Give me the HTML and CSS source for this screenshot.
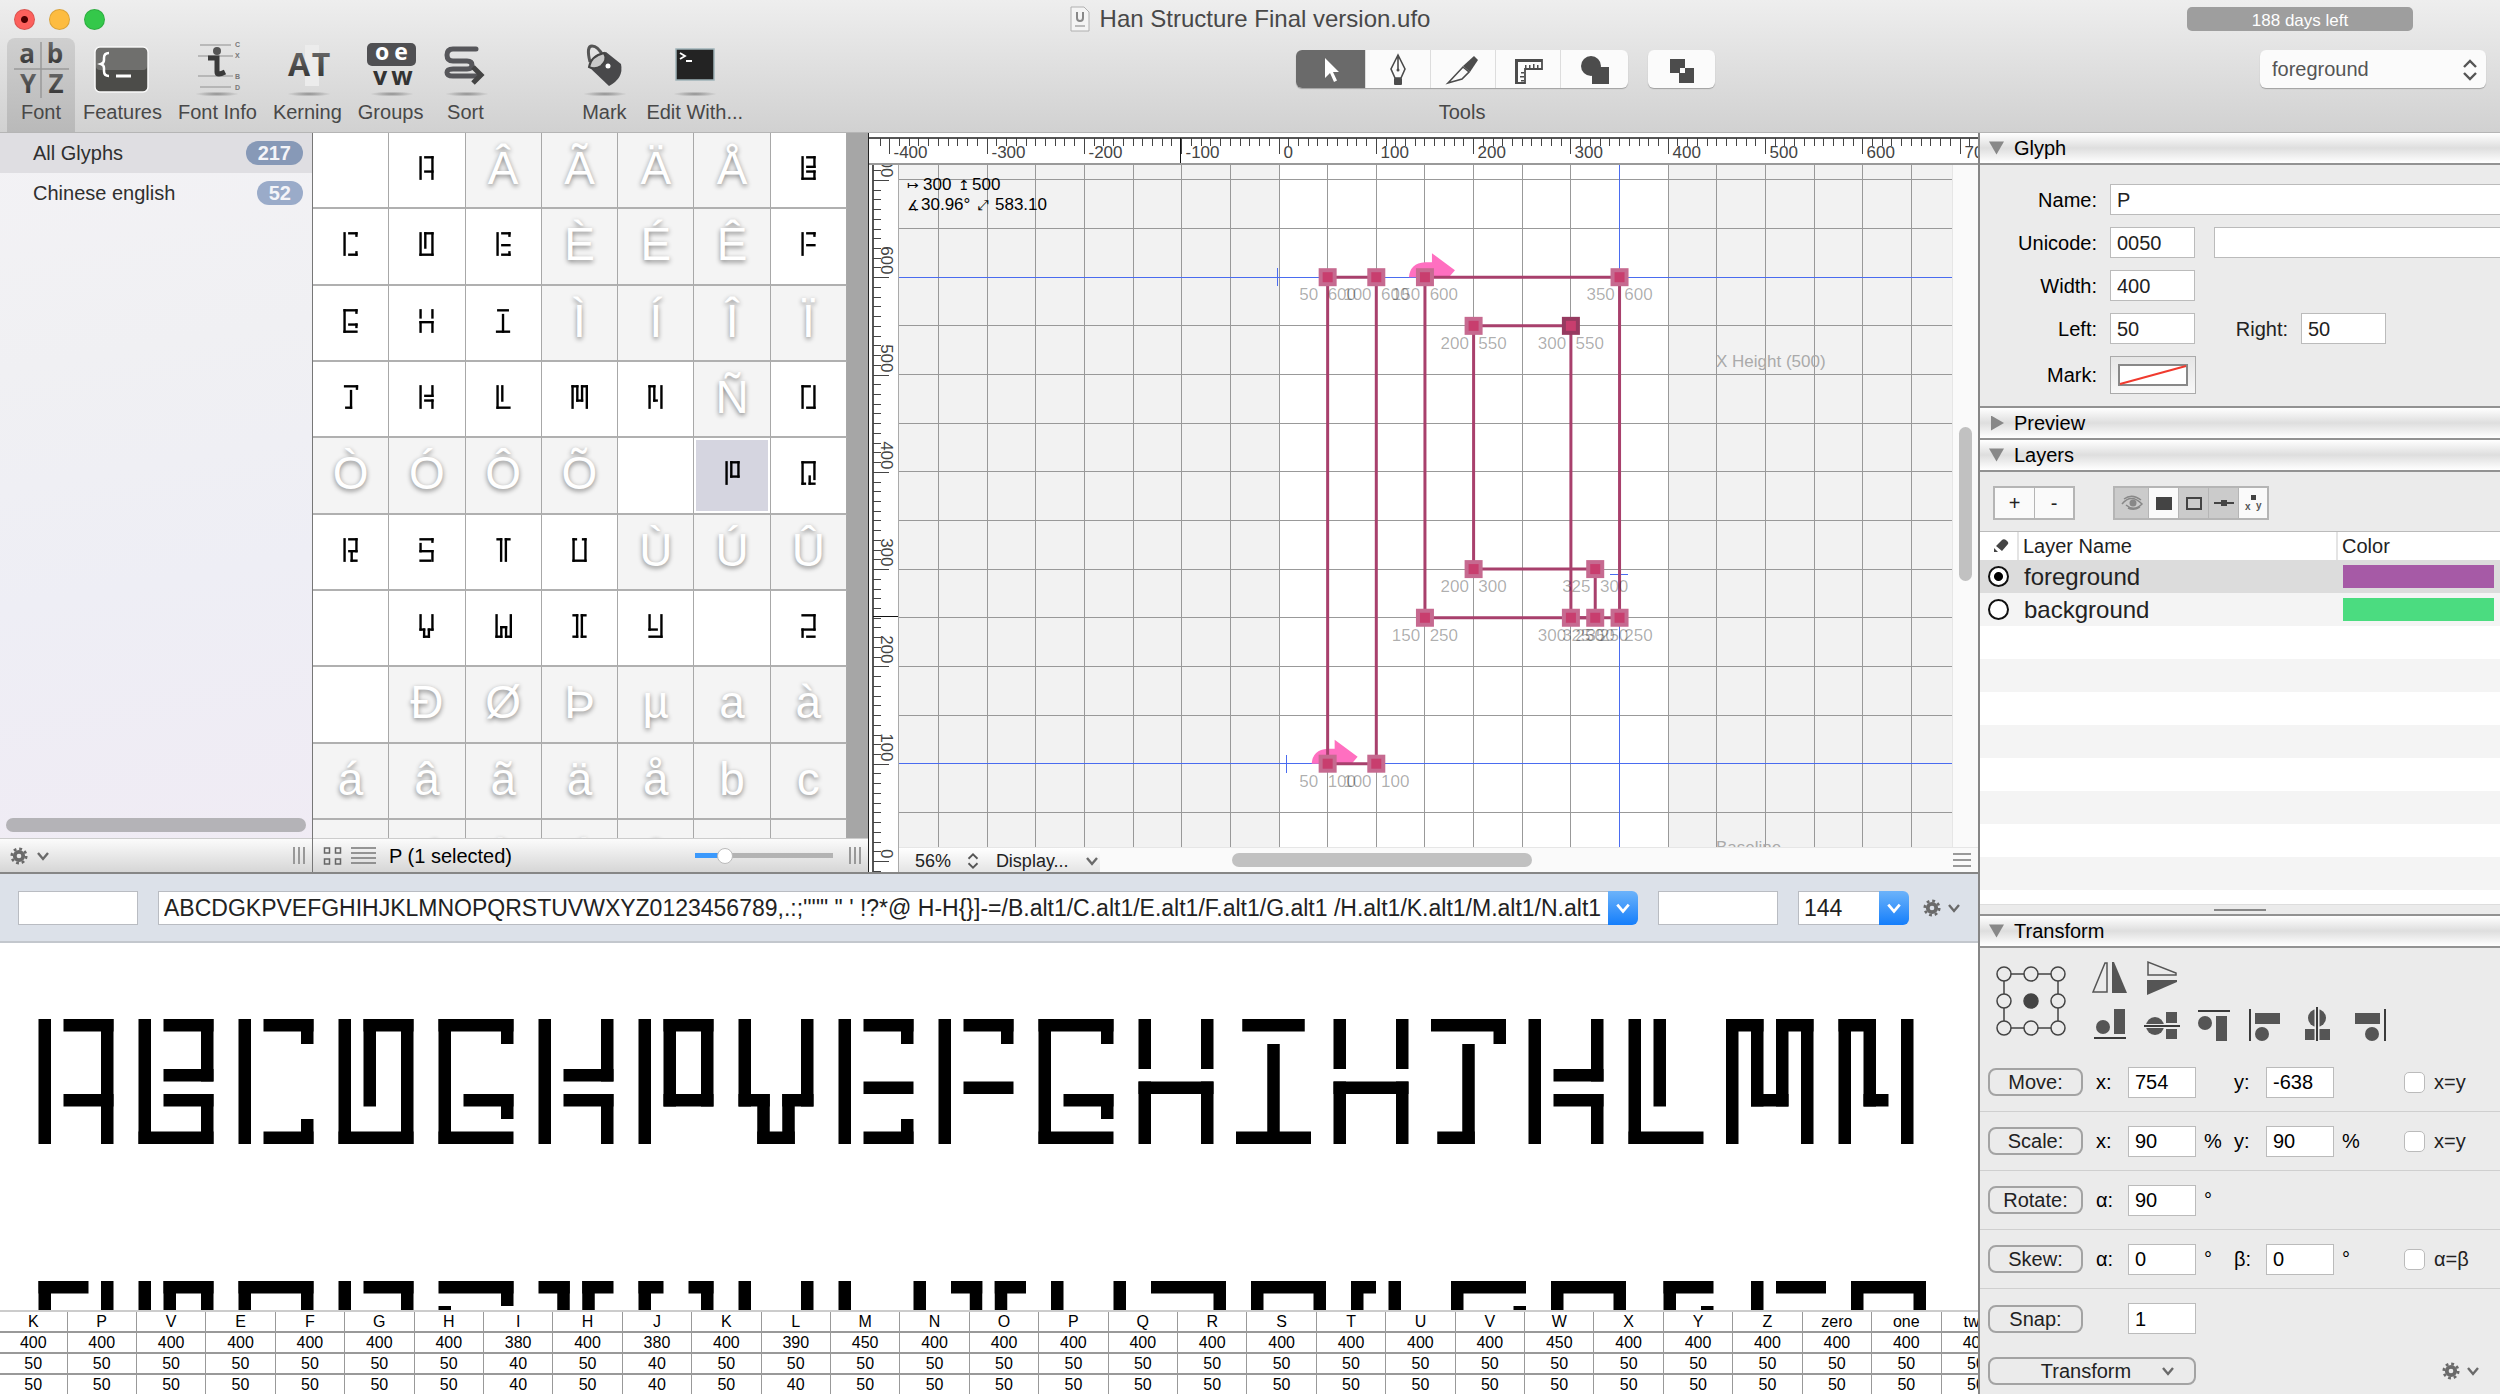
FILE: index.html
```html
<!DOCTYPE html>
<html lang="en">
<head>
    <meta charset="UTF-8">
    <meta name="viewport" content="width=device-width, initial-scale=1.0">
    <title>Han Structure Final version.ufo</title>
    <link rel="stylesheet" href="styles.css">
</head>
<body>

    <svg class="defs" aria-hidden="true">
        <defs>
            <linearGradient id="dark" x1="0" y1="0" x2="0" y2="1">
                <stop offset="0" stop-color="#777"/>
                <stop offset="1" stop-color="#2a2a2a"/>
            </linearGradient>
            <radialGradient id="shade">
                <stop offset="0" stop-color="#000" stop-opacity=".35"/>
                <stop offset="1" stop-color="#000" stop-opacity="0"/>
            </radialGradient>
        </defs>
        <symbol id="gear" viewBox="0 0 20 20">
            <circle cx="10" cy="10" r="4.7" fill="none" stroke="#6a6a6a" stroke-width="4.2"/>
            <circle cx="10" cy="10" r="8" fill="none" stroke="#6a6a6a" stroke-width="3" stroke-dasharray="3.14 3.14"/>
        </symbol>
        <symbol id="chev" viewBox="0 0 14 14">
            <path d="M2 4l5 6 5-6" fill="none" stroke="currentColor" stroke-width="2.4"/>
        </symbol>
        <symbol id="updown" viewBox="0 0 16 24">
            <path d="M2 9l6-6 6 6M2 15l6 6 6-6" fill="none" stroke="#555" stroke-width="2.4"/>
        </symbol>
    </svg>

    <header class="titlebar">
        <div class="title-row">
            <div class="lights">
                <button class="light red" aria-label="Close"></button>
                <button class="light yellow" aria-label="Minimize"></button>
                <button class="light green" aria-label="Zoom"></button>
            </div>
            <h1 class="title">
                <svg width="20" height="26" viewBox="0 0 20 26">
                    <path d="M1 1h13l5 5v19H1z" fill="#f4f4f4" stroke="#b0b0b0"/>
                    <path d="M7 6v6q0 3 3 3t3-3V6" fill="none" stroke="#888" stroke-width="2"/>
                    <path d="M5 20h10" stroke="#bbb" stroke-width="2"/>
                </svg>
                Han Structure Final version.ufo
            </h1>
            <div class="trial">188 days left</div>
        </div>
        <div class="tool-row">
            <nav class="toolbar">
                <button class="tool active">
                    <svg width="60" height="64" viewBox="0 0 60 64">
                        <path d="M30 4v56M3 31h55" stroke="#999" stroke-width="1.5"/>
                        <g fill="url(#dark)" font-size="26" font-weight="bold" text-anchor="middle" font-family="Open Sans, sans-serif">
                            <text x="16" y="25">a</text><text x="44" y="25">b</text>
                            <text x="17" y="55">Y</text><text x="45" y="55">Z</text>
                        </g>
                    </svg>
                    Font
                </button>
                <button class="tool">
                    <svg width="60" height="64" viewBox="0 0 60 64">
                        <rect x="3" y="9" width="53" height="45" rx="5" fill="#4c4c49" stroke="#fafafa" stroke-width="1.5"/>
                        <rect x="4" y="10" width="51" height="22" rx="4" fill="#fff" opacity=".2"/>
                        <path d="M17 15q-5 0-5 5v2q0 3-3 4 3 1 3 4v3q0 5 5 5" fill="none" stroke="#fff" stroke-width="2.5"/>
                        <path d="M24 38h15" stroke="#fff" stroke-width="3"/>
                    </svg>
                    Features
                </button>
                <button class="tool">
                    <svg width="60" height="64" viewBox="0 0 60 64">
                        <path d="M13 7h31M11 18h35M11 38h35M13 49h31" stroke="#aaa" stroke-width="1.5"/>
                        <circle cx="30" cy="13" r="4" fill="#555"/>
                        <path d="M21 20h9v14q0 4 8 0" fill="none" stroke="#3a3a3a" stroke-width="5"/>
                        <g fill="#777" font-size="7" font-weight="bold">
                            <text x="48" y="9">C</text><text x="48" y="20">X</text><text x="48" y="41">B</text><text x="48" y="52">D</text>
                        </g>
                        <ellipse cx="30" cy="56" rx="22" ry="2.5" fill="url(#shade)"/>
                    </svg>
                    Font Info
                </button>
                <button class="tool">
                    <svg width="60" height="64" viewBox="0 0 60 64">
                        <rect x="28" y="7" width="14" height="41" fill="#ececec"/>
                        <g fill="url(#dark)" font-size="32" font-weight="bold" text-anchor="middle" font-family="Open Sans, sans-serif">
                            <text x="22" y="38">A</text><text x="44" y="38">T</text>
                        </g>
                        <ellipse cx="32" cy="56" rx="22" ry="2.5" fill="url(#shade)"/>
                    </svg>
                    Kerning
                </button>
                <button class="tool">
                    <svg width="60" height="64" viewBox="0 0 60 64">
                        <rect x="6" y="5" width="49" height="23" rx="5" fill="#505053"/>
                        <g font-weight="bold" text-anchor="middle" font-family="Open Sans, sans-serif">
                            <text x="21" y="22" font-size="23" fill="#fff">o</text><text x="40" y="22" font-size="23" fill="#fff">e</text>
                            <text x="19" y="47" font-size="25" fill="#333">v</text><text x="41" y="47" font-size="25" fill="#333">w</text>
                        </g>
                        <ellipse cx="31" cy="56" rx="22" ry="2.5" fill="url(#shade)"/>
                    </svg>
                    Groups
                </button>
                <button class="tool">
                    <svg width="60" height="64" viewBox="0 0 60 64">
                        <path d="M42 11H20q-8 0-8 6.5t8 6.500h10q6 0 6 4.500t-6 4.500H19q-7 0-7 4t7 0h25" fill="none" stroke="none"/>
                        <path d="M41 11H18q-6 0-6 6t6 6h14q5 0 5 4t-5 4H18q-6 0-6 3.500t6 3.500h26" fill="none" stroke="#56565a" stroke-width="5" stroke-linecap="round"/>
                        <path d="M38 29l8 8-8 8" fill="none" stroke="#444" stroke-width="5"/>
                        <ellipse cx="32" cy="56" rx="22" ry="2.5" fill="url(#shade)"/>
                    </svg>
                    Sort
                </button>
                <button class="tool gap-before">
                    <svg width="60" height="64" viewBox="0 0 60 64">
                        <path d="M16 24q-4-16 2-16t11 10" fill="none" stroke="#555" stroke-width="3"/>
                        <path d="M15 29Q18 16 32 14l15 12q3 14-12 22z" fill="#48484a"/>
                        <path d="M15 29q2-11 15-14 4 7-3 13-6 4-12 1z" fill="#c8c8c8" stroke="#444" stroke-width="2"/>
                        <circle cx="34" cy="28" r="2.5" fill="#fff"/>
                        <ellipse cx="31" cy="56" rx="22" ry="2.5" fill="url(#shade)"/>
                    </svg>
                    Mark
                </button>
                <button class="tool">
                    <svg width="60" height="64" viewBox="0 0 60 64">
                        <rect x="11" y="11" width="38" height="31" fill="#232323" stroke="#9fb3b8" stroke-width="1.5"/>
                        <path d="M15 15l5 3-5 3M21 23h6" fill="none" stroke="#fff" stroke-width="1.8"/>
                        <ellipse cx="30" cy="56" rx="22" ry="2.5" fill="url(#shade)"/>
                    </svg>
                    Edit With...
                </button>
            </nav>
            <div class="tools">
                <div class="tools-main">
                    <div class="segmented">
                        <button class="on" aria-label="Edit"><svg width="40" height="34" viewBox="0 0 40 34"><path d="M14 6v20l5-5 4 9 3-1.500-4-8.500h6z" fill="#fff"/></svg></button>
                        <button aria-label="Draw"><svg width="40" height="34" viewBox="0 0 40 34"><path d="M20 3l-7 14 4 9h6l4-9zM20 4v14" fill="none" stroke="#4c4c4c" stroke-width="1.6"/><circle cx="20" cy="18" r="1.5" fill="#4c4c4c"/><rect x="16" y="26" width="8" height="7" rx="1" fill="#4c4c4c"/></svg></button>
                        <button aria-label="Slice"><svg width="40" height="34" viewBox="0 0 40 34"><path d="M5 31L20 15l6 5-7 7z" fill="none" stroke="#4c4c4c" stroke-width="1.6"/><path d="M20 14L31 4l4 4-8 12z" fill="#4c4c4c"/></svg></button>
                        <button aria-label="Measure"><svg width="40" height="34" viewBox="0 0 40 34"><path d="M8 8h26v9H17v14H8z" fill="none" stroke="#4c4c4c" stroke-width="1.8"/><path d="M7 7h27v3H10v22H7zM17 16v-3h1.500v3zM21 16v-3h1.500v3zM25 16v-4h1.500v4zM29 16v-3h1.500v3zM16 20h-3v1.500h3zM16 24h-4v1.500h4zM16 28h-3v1.500h3z" fill="#4c4c4c"/></svg></button>
                        <button aria-label="Shape"><svg width="40" height="34" viewBox="0 0 40 34"><ellipse cx="16" cy="14" rx="10" ry="10" fill="#4c4c4c"/><rect x="17" y="15" width="17" height="17" fill="#4c4c4c"/></svg></button>
                    </div>
                    <span class="tools-label">Tools</span>
                </div>
                <div class="segmented single">
                    <button aria-label="Remove overlap"><svg width="40" height="34" viewBox="0 0 40 34"><path d="M8 7h15v9h9v15H17v-10H8zM18 16v5h5v-5z" fill="#4c4c4c" fill-rule="evenodd"/></svg></button>
                </div>
            </div>
            <div class="layer-select">
                <select aria-label="Layer">
                    <option>foreground</option>
                    <option>background</option>
                </select>
                <svg class="arrows" width="16" height="24"><use href="#updown"/></svg>
            </div>
        </div>
    </header>

    <main class="window">
        <div class="work">
            <section class="upper">
                <aside class="sidebar">
                    <ul class="sets">
                        <li class="selected"><a href="#all">All Glyphs</a><span class="badge">217</span></li>
                        <li><a href="#chinese">Chinese english</a><span class="badge">52</span></li>
                    </ul>
                    <div class="h-thumb"></div>
                    <div class="statusbar">
                        <svg width="18" height="18"><use href="#gear"/></svg>
                        <svg class="grey" width="14" height="14"><use href="#chev"/></svg>
                        <span class="grip"></span>
                    </div>
                </aside>

                <section class="collection">
                    <div class="glyph-grid" id="glyphGrid"></div>
                    <div class="statusbar">
                        <svg width="20" height="20" viewBox="0 0 20 20"><path d="M1.500 2h5v5h-5zM12.500 2h5v5h-5zM1.500 13h5v5h-5zM12.500 13h5v5h-5z" fill="none" stroke="#666" stroke-width="1.5"/></svg>
                        <svg width="26" height="20" viewBox="0 0 26 20"><path d="M0 2h25M0 7h25M0 12h25M0 17h25" stroke="#777" stroke-width="1.5"/></svg>
                        <span class="status-text">P (1 selected)</span>
                        <input class="slider" type="range" min="0" max="100" value="18" aria-label="Cell size">
                        <span class="grip"></span>
                    </div>
                </section>

                <section class="editor">
                    <svg class="h-ruler" id="hRuler"></svg>
                    <svg class="v-ruler" id="vRuler"></svg>
                    <svg class="canvas" id="canvas"></svg>
                    <div class="v-scroll"><div class="v-scroll-thumb"></div></div>
                    <div class="editor-bar">
                        <div class="zoom">
                            <span>56%</span>
                            <svg width="12" height="18" viewBox="0 0 16 24"><use href="#updown"/></svg>
                            <span>Display...</span>
                            <svg class="grey" width="14" height="14"><use href="#chev"/></svg>
                        </div>
                        <div class="h-scroll-thumb"></div>
                        <svg width="18" height="16" viewBox="0 0 18 16"><path d="M0 2h18M0 8h18M0 14h18" stroke="#999" stroke-width="2"/></svg>
                    </div>
                </section>
            </section>

            <section class="space-center">
                <div class="text-bar">
                    <input class="side" type="text" aria-label="Text before">
                    <div class="combo wide">
                        <input type="text" aria-label="Preview text" value="ABCDGKPVEFGHIHJKLMNOPQRSTUVWXYZ0123456789,.:;'&quot;'&quot; &quot; ' !?*@ H-H{}]-=/B.alt1/C.alt1/E.alt1/F.alt1/G.alt1 /H.alt1/K.alt1/M.alt1/N.alt1">
                        <button aria-label="Recent texts"><svg width="16" height="16" viewBox="0 0 14 14"><use href="#chev"/></svg></button>
                    </div>
                    <input class="side" type="text" aria-label="Text after">
                    <div class="combo size">
                        <input type="text" aria-label="Point size" value="144">
                        <button aria-label="Sizes"><svg width="16" height="16" viewBox="0 0 14 14"><use href="#chev"/></svg></button>
                    </div>
                    <button class="plain" aria-label="Options">
                        <svg width="18" height="18"><use href="#gear"/></svg>
                        <svg class="grey" width="14" height="14"><use href="#chev"/></svg>
                    </button>
                </div>
                <svg class="preview" id="preview"></svg>
                <table class="metrics" id="metrics"></table>
            </section>
        </div>

        <aside class="inspector">
            <h2 class="open">Glyph</h2>
            <form class="glyph-form">
                <label for="gName">Name:</label>
                <input class="stretch" id="gName" type="text" value="P">
                <label for="gUni">Unicode:</label>
                <div class="pair">
                    <input id="gUni" type="text" value="0050">
                    <input class="stretch" type="text" aria-label="Unicode name">
                </div>
                <label for="gWidth">Width:</label>
                <input id="gWidth" type="text" value="400">
                <label for="gLeft">Left:</label>
                <div class="pair">
                    <input id="gLeft" type="text" value="50">
                    <label class="right-label" for="gRight">Right:</label>
                    <input id="gRight" type="text" value="50">
                </div>
                <label for="gMark">Mark:</label>
                <button class="mark" id="gMark" type="button" aria-label="Mark color">
                    <svg width="70" height="22" viewBox="0 0 70 22"><rect x="1" y="1" width="68" height="20" fill="#fff" stroke="#888" stroke-width="2"/><path d="M2 20L68 2" stroke="#f03a2e" stroke-width="2"/></svg>
                </button>
            </form>
            <h2>Preview</h2>
            <h2 class="open">Layers</h2>
            <div class="layer-tools">
                <div class="btns">
                    <button aria-label="Add layer">+</button>
                    <button aria-label="Remove layer">-</button>
                </div>
                <div class="btns icons">
                    <button class="on eye" aria-label="Visible"><svg width="24" height="20" viewBox="0 0 24 20"><path d="M2 11q9-11 20 0-8 8-16 1M4 6q8-6 17 1M8 15q6 3 12-1" fill="none" stroke="#888" stroke-width="1.5"/><circle cx="13" cy="10" r="3.5" fill="#888"/></svg></button>
                    <button aria-label="Fill"><svg width="20" height="20" viewBox="0 0 20 20"><rect x="2" y="4" width="16" height="13" fill="#444"/></svg></button>
                    <button class="on" aria-label="Stroke"><svg width="20" height="20" viewBox="0 0 20 20"><rect x="3" y="5" width="14" height="11" fill="none" stroke="#444" stroke-width="2"/></svg></button>
                    <button class="on" aria-label="Points"><svg width="20" height="20" viewBox="0 0 20 20"><path d="M0 10h20" stroke="#444" stroke-width="2"/><rect x="7" y="7" width="6" height="6" fill="#444"/></svg></button>
                    <button aria-label="Coordinates"><svg width="20" height="20" viewBox="0 0 20 20"><rect x="8" y="2" width="5" height="5" fill="#444"/><g font-size="10" font-weight="bold" fill="#555"><text x="2" y="17">x</text><text x="13" y="16">y</text></g></svg></button>
                </div>
            </div>
            <div class="layers">
                <table>
                    <tr>
                        <th class="pick"><svg width="16" height="16" viewBox="0 0 16 16"><path d="M3 8l6-6q2-1.500 4.500.5T15 6l-6 7zM1 10l4 4H1z" fill="#444"/></svg></th>
                        <th>Layer Name</th>
                        <th class="color">Color</th>
                    </tr>
                    <tr class="selected">
                        <td><input type="radio" name="layer" id="fg" checked></td>
                        <td><label for="fg">foreground</label></td>
                        <td><div class="swatch purple"></div></td>
                    </tr>
                    <tr>
                        <td><input type="radio" name="layer" id="bg"></td>
                        <td><label for="bg">background</label></td>
                        <td><div class="swatch green-fill"></div></td>
                    </tr>
                </table>
            </div>
            <div class="splitter"></div>
            <h2 class="open">Transform</h2>
            <div class="transform-icons">
                <svg width="72" height="72" viewBox="0 0 72 72">
                    <rect x="9" y="9" width="54" height="54" fill="none" stroke="#444" stroke-width="1.5"/>
                    <g fill="#ebebeb" stroke="#444" stroke-width="1.5">
                        <circle cx="9" cy="9" r="7"/><circle cx="36" cy="9" r="7"/><circle cx="63" cy="9" r="7"/>
                        <circle cx="9" cy="36" r="7"/><circle cx="36" cy="36" r="7" fill="#444"/><circle cx="63" cy="36" r="7"/>
                        <circle cx="9" cy="63" r="7"/><circle cx="36" cy="63" r="7"/><circle cx="63" cy="63" r="7"/>
                    </g>
                </svg>
                <div class="ops">
                    <button aria-label="Flip horizontal"><svg viewBox="0 0 36 36"><path d="M15 3v29H1L13 3z" fill="none" stroke="#555" stroke-width="1.5"/><path d="M20 2h2l13 31H20z" fill="#555"/></svg></button>
                    <button aria-label="Flip vertical"><svg viewBox="0 0 36 36"><path d="M4 15V2l28 11v2z" fill="none" stroke="#555" stroke-width="1.5"/><path d="M3 20h30v2L3 35z" fill="#555"/></svg></button>
                    <i></i><i></i><i></i><i></i>
                    <button aria-label="Align bottom"><svg viewBox="0 0 36 36"><circle cx="11" cy="21" r="7" fill="#555"/><rect x="22" y="3" width="11" height="25" fill="#555"/><path d="M2 32h32" stroke="#000" stroke-width="1.5"/></svg></button>
                    <button aria-label="Center vertically"><svg viewBox="0 0 36 36"><circle cx="11" cy="20" r="9" fill="#555"/><path d="M22 6h11v11H22zM22 23h11v10H22z" fill="#555"/><path d="M0 20h36" stroke="#ebebeb" stroke-width="4"/><path d="M0 20h36" stroke="#000" stroke-width="1.5"/></svg></button>
                    <button aria-label="Align top"><svg viewBox="0 0 36 36"><circle cx="9" cy="17" r="7" fill="#555"/><rect x="20" y="10" width="11" height="25" fill="#555"/><path d="M2 5h32" stroke="#000" stroke-width="1.5"/></svg></button>
                    <button aria-label="Align left"><svg viewBox="0 0 36 36"><circle cx="14" cy="28" r="7" fill="#555"/><rect x="7" y="7" width="25" height="11" fill="#555"/><path d="M2 3v32" stroke="#000" stroke-width="1.5"/></svg></button>
                    <button aria-label="Center horizontally"><svg viewBox="0 0 36 36"><circle cx="17" cy="12" r="9" fill="#555"/><path d="M5 23h10v11H5zM19 23h11v11H19z" fill="#555"/><path d="M17 1v34" stroke="#ebebeb" stroke-width="5"/><path d="M17 1v34" stroke="#000" stroke-width="1.5"/></svg></button>
                    <button aria-label="Align right"><svg viewBox="0 0 36 36"><circle cx="20" cy="28" r="7" fill="#555"/><rect x="3" y="7" width="25" height="11" fill="#555"/><path d="M33 3v32" stroke="#000" stroke-width="1.5"/></svg></button>
                </div>
            </div>
            <form class="transform-form">
                <div class="t-row">
                    <button type="button">Move:</button>
                    <label for="mx">x:</label><input id="mx" type="text" value="754"><span></span>
                    <label for="my">y:</label><input id="my" type="text" value="-638"><span></span>
                    <label class="check"><input type="checkbox">x=y</label>
                </div>
                <div class="t-row">
                    <button type="button">Scale:</button>
                    <label for="sx">x:</label><input id="sx" type="text" value="90"><span>%</span>
                    <label for="sy">y:</label><input id="sy" type="text" value="90"><span>%</span>
                    <label class="check"><input type="checkbox">x=y</label>
                </div>
                <div class="t-row">
                    <button type="button">Rotate:</button>
                    <label for="ra">α:</label><input id="ra" type="text" value="90"><span>°</span>
                </div>
                <div class="t-row">
                    <button type="button">Skew:</button>
                    <label for="ka">α:</label><input id="ka" type="text" value="0"><span>°</span>
                    <label for="kb">β:</label><input id="kb" type="text" value="0"><span>°</span>
                    <label class="check"><input type="checkbox">α=β</label>
                </div>
                <div class="t-row last">
                    <button type="button">Snap:</button>
                    <span></span><input type="text" value="1" aria-label="Snap">
                </div>
            </form>
            <div class="transform-foot">
                <button class="apply">Transform <svg class="grey" width="14" height="14"><use href="#chev"/></svg></button>
                <button class="plain" aria-label="Transform options">
                    <svg width="18" height="18"><use href="#gear"/></svg>
                    <svg class="grey" width="14" height="14"><use href="#chev"/></svg>
                </button>
            </div>
        </aside>
    </main>

    <script src="app.js"></script>
</body>
</html>
```

FILE: styles.css
```css
* { box-sizing: border-box; }
body { margin: 0; height: 100vh; display: flex; flex-direction: column; overflow: hidden; font-family: "Liberation Sans", Arial, sans-serif; font-size: 20px; line-height: 24px; color: #222; background: #ebebeb; }
button, input, select { font: inherit; color: inherit; margin: 0; }
button { padding: 0; border: none; background: none; }
svg { display: block; flex: none; }
.defs { position: absolute; width: 0; height: 0; }
.grey { color: #6a6a6a; }

/* title bar */
.titlebar { flex: none; background: linear-gradient(#eeeeee, #d1d1d1); border-bottom: 1px solid #b5b5b5; }
.title-row { display: grid; grid-template-columns: 1fr auto 1fr; align-items: center; height: 38px; }
.lights { display: flex; gap: 14px; padding-left: 14px; }
.light { width: 21px; height: 21px; border-radius: 50%; border: 1px solid #0002; }
.red { background: radial-gradient(circle, #4d0000 3px, #fc605c 4px); }
.yellow { background: #fdbc40; }
.green { background: #34c84a; }
.title { display: flex; align-items: center; gap: 10px; margin: 0; font-size: 24px; font-weight: normal; color: #484848; }
.trial { justify-self: end; width: 226px; height: 24px; margin-right: 87px; border-radius: 5px; background: #9e9e9e; color: #fff; font-size: 17px; line-height: 28px; text-align: center; }
.tool-row { display: flex; justify-content: space-between; height: 94px; padding: 0 14px 0 7px; }
.toolbar { display: flex; }
.tool { display: flex; flex-direction: column; align-items: center; min-width: 68px; padding: 0 8px; border-radius: 8px 8px 0 0; line-height: 20px; color: #484848; white-space: nowrap; }
.tool svg { margin: 0 -4px; }
.tool.active { background: linear-gradient(#cfcfcf, #b9b9b9); }
.gap-before { margin-left: 71px; }
.tools { display: flex; gap: 20px; padding-top: 12px; }
.tools-main { display: flex; flex-direction: column; align-items: center; gap: 14px; }
.tools-label { line-height: 20px; color: #484848; }
.segmented { display: flex; height: 38px; border-radius: 6px; background: #fbfbfb; box-shadow: 0 1px 1px #0004; overflow: hidden; }
.segmented button { display: flex; align-items: center; justify-content: center; width: 65px; border-right: 1px solid #ddd; }
.segmented button:last-child { width: 67px; border: none; }
.segmented .on { width: 70px; background: #6a6a6a; }
.layer-select { position: relative; width: 226px; padding-top: 12px; }
.layer-select select { width: 100%; height: 38px; padding: 0 12px; border: none; border-radius: 6px; background: #fbfbfb; box-shadow: 0 1px 1px #0004; appearance: none; color: #555; }
.arrows { position: absolute; right: 8px; top: 20px; }

/* main frame */
.window { flex: 1; min-height: 0; display: grid; grid-template-columns: 1fr 522px; }
.work { min-width: 0; min-height: 0; display: grid; grid-template-rows: 741fr 520fr; }
.upper { min-height: 0; display: grid; grid-template-columns: 313px 556px 1fr; border-bottom: 2px solid #868686; }
.sidebar { display: flex; flex-direction: column; min-height: 0; border-right: 1px solid #777; background: linear-gradient(170deg, #f3f2f5, #f0f0f3 30%, #eeeef5 60%, #f0ebf4); }
.sets { flex: 1; margin: 0; padding: 0; list-style: none; }
.sets li { display: flex; align-items: center; justify-content: space-between; height: 40px; padding: 0 9px 0 33px; }
.sets .selected { background: #dfdee2; }
.sets a { color: #2f2f2f; text-decoration: none; }
.badge { padding: 0 12px; border-radius: 12px; background: #9aabc9; color: #f4f4f8; font-weight: bold; }
.selected .badge { background: #8799b7; }
.h-thumb { height: 14px; margin: 0 6px 6px; border-radius: 7px; background: #b4b3b7; }
.statusbar { flex: none; display: flex; align-items: center; gap: 8px; height: 34px; padding: 0 6px 0 10px; border-top: 1px solid #ccc; background: linear-gradient(#fbfbfb, #d6d6d6); color: #000; }
.grip { width: 13px; height: 17px; margin-left: auto; background: repeating-linear-gradient(90deg, #999 0 2px, transparent 2px 5px); }

/* glyph collection */
.collection { display: flex; flex-direction: column; min-height: 0; background: #a6a6a6; border-right: 1px solid #222; }
.glyph-grid { flex: 1; min-height: 0; display: grid; grid-template-columns: repeat(7, 1fr); grid-template-rows: repeat(9, 1fr) 18px; margin-right: 21px; overflow: hidden; }
.cell { display: flex; align-items: center; justify-content: center; min-height: 0; border-right: 1px solid #a8a8a8; border-bottom: 2px solid #b0b0b0; background: #fff; padding-bottom: 4px; overflow: hidden; }
.cell.ghost { background: #f4f4f4; color: #fff; font-size: 46px; line-height: 52px; text-shadow: 0 2px 5px #0007; }
.cell.current { background: #d5d5e0; box-shadow: inset 0 0 0 2px #fff; }
.cell.cut { align-items: flex-start; padding-top: 10px; border-bottom: none; }
.status-text { margin-left: 4px; }
.slider { width: 138px; height: 20px; margin: 0 8px 0 auto; appearance: none; background: linear-gradient(90deg, #3b99fc 20%, #b3b3b3 20%) center / 100% 5px no-repeat; }
.slider::-webkit-slider-thumb { appearance: none; width: 16px; height: 16px; border-radius: 50%; background: #fff; border: 1px solid #bbb; }
.slider + .grip { margin-left: 0; }

/* glyph editor */
.editor { min-width: 0; min-height: 0; display: grid; grid-template-columns: 30px 1fr 26px; grid-template-rows: 32px 1fr 25px; background: #fff; }
.editor svg { min-width: 0; min-height: 0; }
.h-ruler { grid-area: 1 / 1 / 2 / 4; width: 100%; height: 100%; border-bottom: 2px solid #9a9a9a; }
.v-ruler { grid-area: 2 / 1 / 4 / 2; width: 100%; height: 100%; border-right: 1px solid #aaa; }
.canvas { grid-area: 2 / 2; width: 100%; height: 100%; background: #f2f2f2; }
.ruler-line { stroke: #555; stroke-width: 2; }
.tick { stroke: #444; stroke-width: 1; }
.pointer { stroke: #111; stroke-width: 1; }
.ruler-text { font-size: 17px; fill: #444; }
.gridline { stroke: #999; stroke-width: 1; }
.guide { stroke: #4a6cf0; stroke-width: 1; shape-rendering: crispEdges; }
.outline { fill: none; stroke: #a8406c; stroke-width: 3; }
.node { fill: #c83e6e; stroke: #c66a90; stroke-width: 4; }
.node.dark { stroke: #963a60; }
.start { fill: #ff6fc0; }
.coord { font-size: 17px; fill: #000; fill-opacity: .32; text-anchor: middle; white-space: pre; }
.dim { font-size: 17px; fill: #aaa; }
.info { font-size: 17px; fill: #000; }
.info.sign { font-size: 14px; }
.v-scroll { grid-area: 2 / 3; padding: 262px 6px 0; background: #fafafa; border-left: 1px solid #e6e6e6; }
.v-scroll-thumb { height: 154px; border-radius: 7px; background: #c1c1c1; }
.editor-bar { grid-area: 3 / 2 / 4 / 4; display: flex; align-items: center; padding-right: 7px; background: #fafafa; border-top: 1px solid #e6e6e6; }
.zoom { display: flex; align-items: center; justify-content: space-between; width: 201px; height: 100%; padding: 2px 1px 0 16px; font-size: 18px; background: linear-gradient(#fff, #e4e4e4); }
.h-scroll-thumb { width: 300px; height: 14px; margin: 0 auto 0 132px; border-radius: 7px; background: #c1c1c1; }

/* text preview and metrics */
.space-center { min-width: 0; min-height: 0; display: flex; flex-direction: column; background: #fff; }
.text-bar { flex: none; display: flex; align-items: center; gap: 20px; height: 69px; padding: 0 17px 0 18px; background: #dce1e9; border-bottom: 2px solid #c3c7cd; font-size: 23px; }
.text-bar input { min-width: 0; height: 34px; padding: 2px 5px 0; border: 1px solid #b9bcc2; background: #fff; }
.text-bar .side { flex: none; width: 120px; }
.combo { display: flex; }
.combo input { flex: 1; border-right: none; }
.combo button { display: flex; align-items: center; justify-content: center; width: 30px; border-radius: 0 6px 6px 0; background: linear-gradient(#6cb3fa, #157efb); color: #fff; }
.wide { flex: 1; min-width: 0; }
.size { width: 111px; }
.plain { display: flex; align-items: center; gap: 6px; }
.text-bar .plain { margin-left: -6px; }
.preview { flex: 1; width: 100%; min-height: 0; }
.metrics { flex: none; width: 100%; table-layout: fixed; border-collapse: collapse; border-top: 2px solid #ccc; font-size: 16px; line-height: 19px; color: #000; }
.metrics col.first { width: 67px; }
.metrics col.last { width: 37px; }
.metrics td { padding: 0; border-right: 1px solid #999; border-bottom: 2px solid #999; text-align: center; overflow: hidden; white-space: nowrap; }
.metrics td span { display: block; }
.metrics td:last-child { border-right: none; }
.metrics td:last-child span { width: 69px; }
.metrics tr:last-child td { border-bottom: none; }

/* inspector */
.inspector { min-width: 0; min-height: 0; display: flex; flex-direction: column; border-left: 2px solid #868686; overflow: hidden; }
.inspector h2 { flex: none; display: flex; align-items: center; gap: 10px; height: 32px; margin: 0; padding-left: 9px; font-size: 20px; font-weight: normal; color: #000; background: linear-gradient(#fff, #dedede 50%, #fff); border-bottom: 2px solid #929292; }
.inspector h2::before { content: ""; width: 15px; height: 15px; background: #888; clip-path: polygon(2px 0, 15px 50%, 2px 100%); }
.inspector h2.open::before { clip-path: polygon(0 1px, 100% 1px, 50% 14px); }
.inspector input[type=text] { width: 85px; height: 31px; padding: 1px 6px 0; border: 1px solid #bbb; background: #fff; }
.inspector input.stretch { width: auto; flex: 1; min-width: 0; border-right: none; }
.glyph-form { flex: none; display: grid; grid-template-columns: 117px 1fr; column-gap: 13px; row-gap: 12px; align-items: center; padding: 19px 0 12px; border-bottom: 2px solid #929292; }
.glyph-form > label { text-align: right; color: #000; }
.pair { display: flex; align-items: center; }
.pair .stretch { margin-left: 19px; }
.right-label { width: 92px; margin: 0 13px 0 1px; text-align: right; }
.mark { display: flex; align-items: center; justify-content: center; width: 86px; height: 38px; border: 1px solid #aaa; background: linear-gradient(#e6e6e6, #f8f8f8); }
.layer-tools { flex: none; display: flex; gap: 38px; height: 60px; padding: 14px 13px; border-bottom: 1px solid #bbb; }
.btns { display: flex; height: 34px; border: 2px solid #b5b5b5; background: #fafafa; }
.btns button { display: flex; align-items: center; justify-content: center; width: 40px; border-right: 1px solid #b5b5b5; }
.btns button:last-child { width: 38px; border: none; }
.btns.icons button { width: 30px; }
.btns.icons button:last-child { width: 28px; }
.btns.icons .eye { width: 34px; }
.btns .on { background: #cbcbcb; }
.layers { flex: 1; min-height: 0; background: repeating-linear-gradient(#fff 0 33px, #f4f4f4 33px 66px) 0 28px no-repeat #fff; overflow: hidden; }
.layers table { width: 100%; table-layout: fixed; border-collapse: collapse; }
.layers th { height: 28px; padding: 0 4px; font-weight: normal; text-align: left; background: #fff; border-right: 2px solid #e4e4e4; }
.layers th.pick { width: 38px; padding-left: 13px; }
.layers th.color { width: 163px; border: none; }
.layers td { height: 33px; padding: 0 6px; font-size: 24px; }
.layers .selected { background: #dcdcdc; }
.layers input { display: block; appearance: none; width: 21px; height: 21px; margin-left: 2px; border: 2px solid #111; border-radius: 50%; background: #fff; }
.layers input:checked { background: radial-gradient(circle, #000 4px, #fff 5px); }
.swatch { height: 23px; }
.purple { background: #a65aa6; }
.green-fill { background: #4bdc80; }
.splitter { flex: none; height: 12px; border-bottom: 2px solid #929292; background: linear-gradient(#888, #888) 234px 4px / 52px 2px no-repeat; border-top: 1px solid #ddd; }
.transform-icons { flex: none; display: flex; align-items: center; gap: 25px; height: 105px; padding-left: 15px; }
.ops { display: grid; grid-template-columns: repeat(6, 36px); gap: 10px 16px; }
.ops svg { width: 36px; height: 36px; }
.t-row { display: grid; grid-template-columns: 108px 32px 68px 38px 32px 68px 70px 1fr; align-items: center; height: 59px; padding-left: 8px; border-bottom: 1px solid #cfcfcf; color: #000; }
.t-row.last { border: none; }
.t-row button, .apply { width: 95px; height: 28px; border: 2px solid #a3a3a3; border-radius: 8px; line-height: 24px; color: #222; }
.inspector .t-row input[type=text] { width: 68px; }
.t-row span { padding-left: 8px; }
.check { display: flex; align-items: center; gap: 9px; color: #222; }
.check input { appearance: none; width: 21px; height: 21px; border: 1px solid #bbb; border-radius: 5px; background: #fff; }
.transform-foot { flex: none; display: flex; align-items: center; justify-content: space-between; height: 46px; padding: 0 20px 0 8px; }
.apply { display: flex; align-items: center; justify-content: center; gap: 30px; width: 208px; padding-left: 32px; }
```

FILE: app.js
```js
const SVG = "http://www.w3.org/2000/svg";

// every glyph: advance width + bars [x, y, w, h] in font units, y down from the top
const han = {
    A: [400, [50,0,50,500],[150,0,200,50],[300,0,50,500],[150,300,200,50]],
    B: [400, [50,0,50,500],[150,0,200,50],[300,0,50,250],[150,200,200,50],[150,300,200,50],[300,300,50,200],[50,450,300,50]],
    C: [400, [50,0,50,500],[150,0,200,50],[300,0,50,100],[150,450,200,50],[300,400,50,100]],
    D: [400, [50,0,50,500],[150,0,200,50],[300,0,50,500],[50,450,300,50],[150,0,50,350]],
    E: [400, [50,0,50,500],[150,0,200,50],[300,0,50,100],[150,250,200,50],[150,450,200,50],[300,400,50,100]],
    F: [400, [50,0,50,500],[150,0,200,50],[300,0,50,100],[150,250,200,50]],
    G: [400, [50,0,50,500],[50,0,300,50],[300,0,50,100],[50,450,300,50],[150,300,200,50],[300,300,50,100]],
    H: [400, [50,0,50,200],[300,0,50,200],[50,250,300,50],[50,250,50,250],[300,250,50,250]],
    I: [380, [65,0,250,50],[165,100,50,400],[40,450,300,50]],
    J: [380, [40,0,300,50],[290,0,50,100],[165,100,50,400],[65,450,150,50]],
    K: [400, [50,0,50,500],[300,0,50,250],[150,200,200,50],[150,300,200,50],[300,300,50,200]],
    L: [390, [50,0,50,500],[150,0,50,350],[50,450,300,50]],
    M: [450, [50,0,50,500],[50,0,150,50],[150,0,50,350],[150,300,150,50],[250,0,50,350],[250,0,150,50],[350,0,50,500]],
    N: [400, [50,0,50,500],[50,0,150,50],[150,0,50,350],[150,300,100,50],[300,0,50,500]],
    O: [400, [50,0,50,500],[50,0,200,50],[300,0,50,500],[150,450,200,50]],
    P: [400, [50,0,50,500],[150,0,200,50],[150,0,50,350],[300,0,50,350],[150,300,200,50]],
    Q: [400, [50,0,300,50],[50,0,50,500],[300,0,50,400],[50,450,100,50],[200,300,50,200],[200,450,150,50]],
    R: [400, [50,0,50,500],[150,0,200,50],[300,0,50,300],[150,250,200,50],[200,250,50,250],[200,450,150,50]],
    S: [400, [50,0,300,50],[300,0,50,100],[50,100,50,200],[50,250,300,50],[300,250,50,250],[50,450,250,50]],
    T: [400, [50,0,125,50],[125,0,50,500],[225,0,125,50],[225,0,50,500]],
    U: [400, [50,0,50,500],[50,0,100,50],[250,0,100,50],[300,0,50,500],[50,450,300,50]],
    V: [400, [50,0,50,350],[300,0,50,350],[50,300,125,50],[225,300,125,50],[125,300,50,200],[225,300,50,200],[125,450,150,50]],
    W: [450, [50,0,50,500],[350,0,50,500],[150,250,50,250],[250,250,50,250],[150,250,150,50],[50,450,150,50],[250,450,150,50]],
    X: [400, [50,0,125,50],[125,0,50,500],[50,450,125,50],[225,0,125,50],[225,0,50,500],[225,450,125,50]],
    Y: [400, [50,0,50,350],[50,300,200,50],[300,0,50,500],[50,450,300,50]],
    Z: [400, [50,0,300,50],[300,0,50,350],[50,300,300,50],[50,300,50,200],[150,450,200,50]],
    0: [400, [50,0,300,50],[50,0,50,500],[300,0,50,500],[50,450,300,50]],
    1: [400, [50,0,100,50],[50,0,50,500],[200,0,50,500]],
    2: [400, [50,0,300,50],[50,0,50,300],[300,100,50,400]],
    3: [450, [50,0,300,50],[50,0,50,500],[300,0,50,500]],
    4: [350, [50,0,200,50],[50,0,50,500],[200,100,50,400]],
    5: [400, [50,0,50,500],[150,0,200,50]],
    6: [400, [50,0,300,50],[50,0,50,500],[300,0,50,500]]
};

function el(name, attrs, parent, text) {
    const node = document.createElementNS(SVG, name);
    for (const key in attrs) node.setAttribute(key, attrs[key]);
    if (text !== undefined) node.textContent = text;
    if (parent) parent.appendChild(node);
    return node;
}

function bars(name, parent, dx) {
    han[name].slice(1).forEach(b => el("rect", { x: b[0] + dx, y: b[1], width: b[2], height: b[3] }, parent));
}

function line(parent, cls, x1, y1, x2, y2) {
    el("line", { class: cls, x1, y1, x2, y2 }, parent);
}

// ---- glyph collection ("." is an empty cell, lower row is cut off) ----
const cells = ". A Â Ã Ä Å B C D E È É Ê F G H I Ì Í Î Ï J K L M N Ñ O Ò Ó Ô Õ . P Q R S T U Ù Ú Û . V W X Y . Z . Ð Ø Þ µ a à á â ã ä å b c ç d è é ê ë e".split(" ");
const grid = document.getElementById("glyphGrid");
cells.forEach((name, i) => {
    const cell = document.createElement("div");
    cell.className = "cell";
    if (han[name]) {
        const w = han[name][0];
        const svg = el("svg", { width: w * 19 / 400, height: 24, viewBox: `0 0 ${w} 500` }, cell);
        bars(name, svg, 0);
    } else if (name !== ".") {
        cell.classList.add("ghost");
        cell.textContent = name;
    }
    if (name === "P") cell.classList.add("current");
    if (i > 62) cell.classList.add("cut");
    grid.appendChild(cell);
});

// ---- rulers ----
const scale = 0.973;
const x0 = 380, y0 = 696;
const X = u => x0 + u * scale;
const Y = v => y0 - v * scale;

const hr = document.getElementById("hRuler");
line(hr, "ruler-line", 0, 5, 1200, 5);
for (let u = -410; u <= 710; u += 10) {
    const x = Math.floor(X(u) + 30) + 0.5;
    const major = u % 100 === 0;
    line(hr, "tick", x, 5, x, major ? 21 : 13);
    if (major) el("text", { class: "ruler-text", x: x + 4, y: 25 }, hr, u);
}
line(hr, "pointer", 311.5, 5, 311.5, 32);

const vr = document.getElementById("vRuler");
line(vr, "ruler-line", 4, 0, 4, 710);
for (let v = -10; v <= 710; v += 10) {
    const y = Math.round(Y(v)) + 0.5;
    const major = v % 100 === 0;
    line(vr, "tick", 4, y, major ? 20 : 12, y);
    if (major) el("text", { class: "ruler-text", "text-anchor": "end", transform: `translate(12 ${y - 3}) rotate(90)` }, vr, v);
}
line(vr, "pointer", 4, 451.5, 29, 451.5);

// ---- glyph canvas ----
const cv = document.getElementById("canvas");
el("rect", { x: X(0), y: 0, width: 400 * scale, height: "100%", fill: "#fff" }, cv);
for (let u = -350; u <= 650; u += 50) {
    const x = Math.floor(X(u)) + 0.5;
    line(cv, "gridline", x, 0, x, 2000);
}
for (let v = 0; v <= 700; v += 50) {
    const y = Math.floor(Y(v)) + 0.5;
    line(cv, "gridline", 0, y, 2000, y);
}
[600, 100].forEach(v => line(cv, "guide", 0, Y(v), 2000, Y(v)));
line(cv, "guide", X(350), 0, X(350), 2000);
line(cv, "guide", 378, 103, 378, 121);
line(cv, "guide", 387, 590, 387, 608);
line(cv, "guide", 711, 409, 729, 409);

[[150, 600], [50, 100]].forEach(p =>
    el("path", { class: "start", transform: `translate(${X(p[0])} ${Y(p[1])})`, d: "M-16 0Q-15-14 0-15H7V-24L30-7 24 0z" }, cv));

const contours = [
    [[50, 100], [100, 100], [100, 600], [50, 600]],
    [[150, 600], [350, 600], [350, 250], [150, 250]],
    [[325, 250], [325, 300], [200, 300], [200, 550], [300, 550], [300, 250]]
];
contours.forEach(c => el("path", { class: "outline", d: "M" + c.map(p => X(p[0]) + " " + Y(p[1])).join("L") + "z" }, cv));
contours.flat().forEach(([u, v]) => {
    const cls = u === 300 && v === 550 ? "node dark" : "node";
    el("rect", { class: cls, x: X(u) - 7, y: Y(v) - 7, width: 14, height: 14 }, cv);
    el("text", { class: "coord", x: X(u), y: Y(v) + 23 }, cv, `${u}  ${v}`);
});

el("text", { class: "dim", x: 817, y: 202 }, cv, "X Height (500)");
el("text", { class: "dim", x: 817, y: 688 }, cv, "Baseline");
[[24, 25, "300"], [73, 25, "500"], [22, 45, "30.96°"], [96, 45, "583.10"]]
    .forEach(t => el("text", { class: "info", x: t[0], y: t[1] }, cv, t[2]));
[[8, 25, "↦"], [59, 25, "↥"], [8, 45, "∡"], [79, 45, "⤢"]]
    .forEach(t => el("text", { class: "info sign", x: t[0], y: t[1] }, cv, t[2]));

// ---- text preview ----
const pv = document.getElementById("preview");
["ABCDGKPVEFGHIHJKLMN", "OPQRSTUVWXYZ0123456"].forEach((text, row) => {
    const g = el("g", { transform: `translate(26 ${76 + row * 262}) scale(.25)` }, pv);
    let dx = 0;
    for (const ch of text) {
        bars(ch, g, dx);
        dx += han[ch][0];
    }
});

// ---- metrics ----
const names = "K P V E F G H I H J K L M N O P Q R S T U V W X Y Z zero one two".split(" ");
const rows = [
    names,
    names.map(n => han[n] ? han[n][0] : 400),
    names.map(n => n === "I" || n === "J" ? 40 : 50),
    names.map(n => "IJL".includes(n) ? 40 : 50)
];
document.getElementById("metrics").innerHTML =
    '<colgroup><col class="first">' + "<col>".repeat(names.length - 2) + '<col class="last"></colgroup>' +
    rows.map(r => "<tr>" + r.map(v => `<td><span>${v}</span></td>`).join("") + "</tr>").join("");
```
